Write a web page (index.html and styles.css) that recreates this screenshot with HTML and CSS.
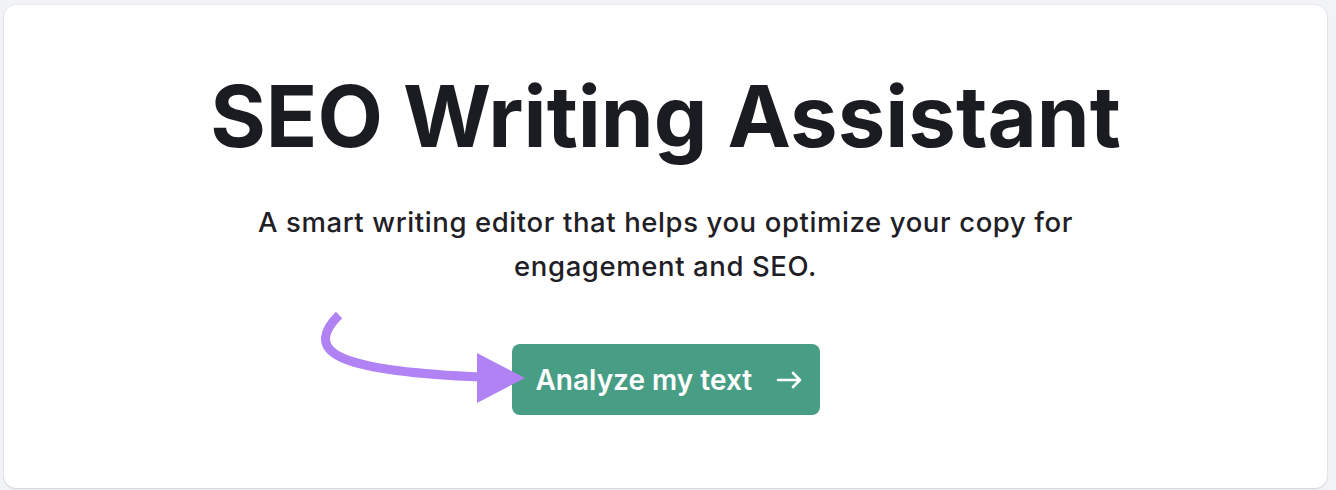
FILE: index.html
```html
<!DOCTYPE html>
<html lang="en">
<head>
<meta charset="utf-8">
<link rel="stylesheet" href="styles.css">
</head>
<body>
<main class="card">
  <h1 class="title">SEO Writing Assistant</h1>
  <p class="subtitle">A smart writing editor that helps you optimize your copy for engagement and SEO.</p>
  <div class="cta">
    <svg class="pointer" width="220" height="100" viewBox="0 0 220 100" aria-hidden="true">
      <path d="M29 11 C 15 25, 5 43, 35 55 C 65 67, 120 71, 172 73" fill="none" stroke="#b182f4" stroke-width="9"/>
      <polygon points="167,49 167,99 215,74" fill="#b182f4"/>
    </svg>
    <button class="btn" type="button">Analyze my text
      <svg class="btn-arrow" width="26" height="20" viewBox="0 0 26 20" aria-hidden="true">
        <path d="M2 10 H24 M17 3 L24 10 L17 17" fill="none" stroke="#fff" stroke-width="2.6" stroke-linecap="round" stroke-linejoin="round"/>
      </svg>
    </button>
  </div>
</main>
</body>
</html>
```

FILE: styles.css
```css
html, body {
  margin: 0;
  padding: 0;
}
body {
  background: #f2f3f7;
  padding: 5px 9px 2px 4px;
  font-family: Inter, "Noto Sans", sans-serif;
  color: #1b1c22;
}
.card {
  background: #fff;
  border-radius: 12px;
  box-shadow: 0 1px 2px rgba(30, 35, 60, 0.12), 0 0 0 1px rgba(30, 35, 60, 0.04);
  height: 483px;
  box-sizing: border-box;
  display: flex;
  flex-direction: column;
  align-items: center;
  padding-top: 62px;
}
.title {
  margin: 0;
  font-size: 85px;
  font-weight: 700;
  line-height: 100px;
  letter-spacing: 0;
  color: #1b1c22;
}
.subtitle {
  margin: 33px 0 0;
  width: 860px;
  text-align: center;
  font-size: 27.5px;
  font-weight: 500;
  letter-spacing: 0.6px;
  line-height: 44px;
  color: #1f2026;
}
.cta {
  position: relative;
  margin-top: 56px;
}
.btn {
  display: flex;
  align-items: center;
  gap: 24px;
  height: 71px;
  width: 308px;
  box-sizing: border-box;
  padding: 0 16px 0 24px;
  border: none;
  border-radius: 8px;
  background: #489e84;
  color: #fff;
  font-family: Inter, "Noto Sans", sans-serif;
  font-size: 28px;
  font-weight: 600;
}
.pointer {
  position: absolute;
  left: -202px;
  top: -40px;
  z-index: 1;
}
```
